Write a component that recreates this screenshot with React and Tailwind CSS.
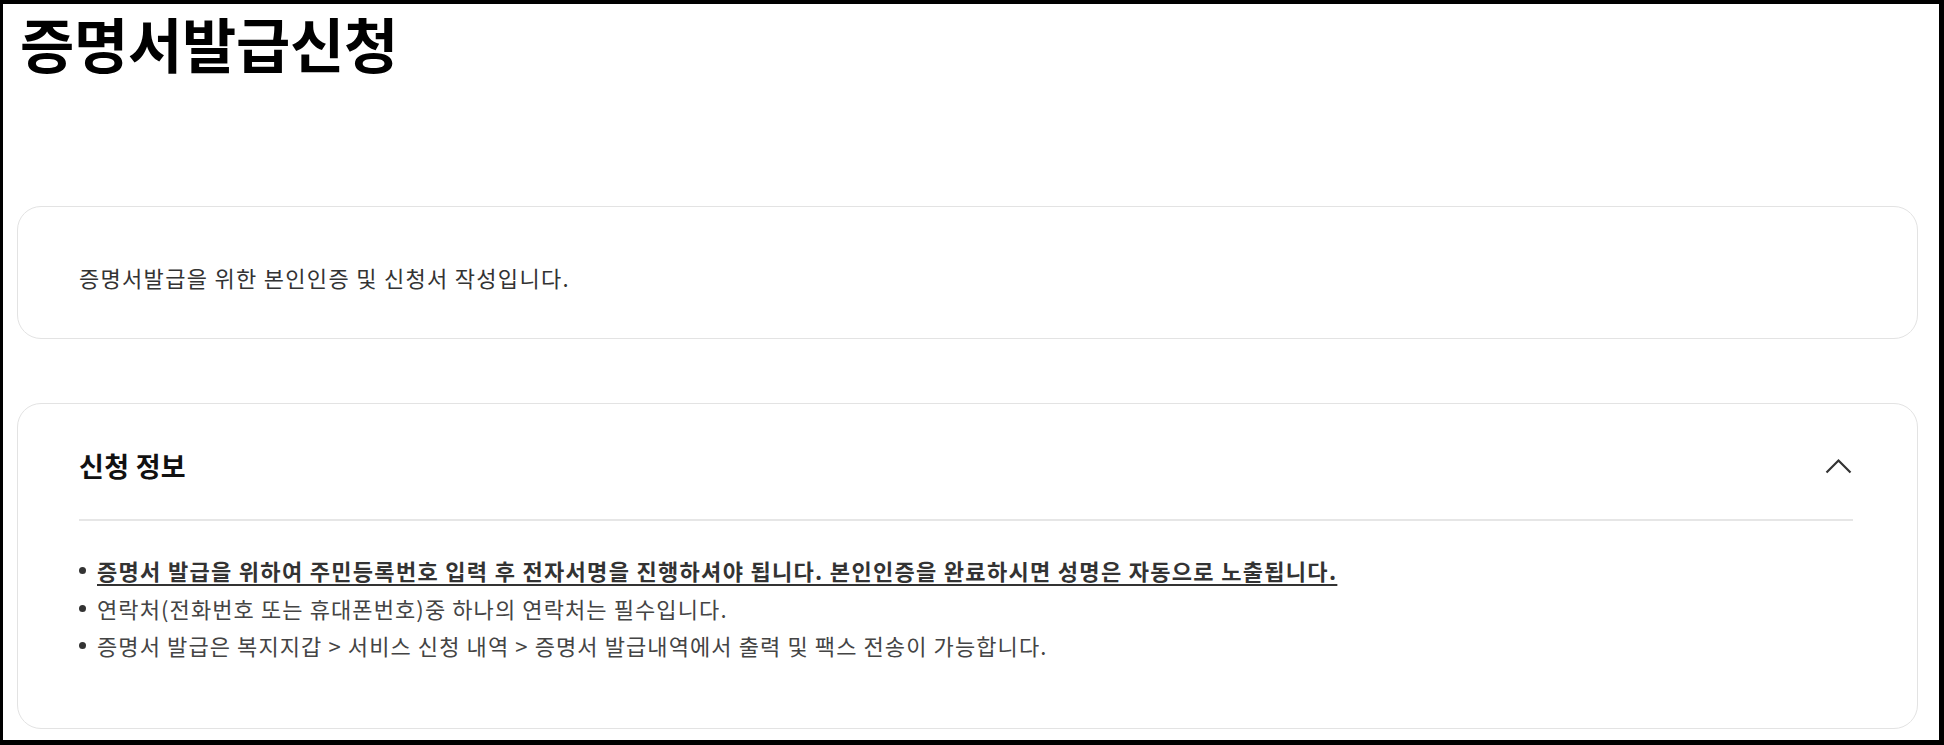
const notices = [
    { text: '증명서 발급을 위하여 주민등록번호 입력 후 전자서명을 진행하셔야 됩니다. 본인인증을 완료하시면 성명은 자동으로 노출됩니다.', strong: true },
    { text: '연락처(전화번호 또는 휴대폰번호)중 하나의 연락처는 필수입니다.' },
    { text: '증명서 발급은 복지지갑 > 서비스 신청 내역 > 증명서 발급내역에서 출력 및 팩스 전송이 가능합니다.' },
];

const App = () => {
    return (
        <div className="w-[1944px] h-[745px] bg-white border-black border-l-[3px] border-t-[4px] border-r-[5px] border-b-[5px] pl-[14px] pr-[21px] font-['Noto_Sans_CJK_KR','Noto_Sans',sans-serif] text-[#333]">
            {/* Page title */}
            <h1 className="mt-[6px] pl-[3px] text-[59px] leading-[66px] font-bold tracking-[-0.3px] text-black">증명서발급신청</h1>

            {/* Intro card */}
            <div className="mt-[130px] h-[133px] rounded-[24px] border border-[#e3e3e3] flex items-center pl-[61px] pt-[10px]">
                <p className="text-[22px] tracking-[1.3px] text-[#333]">증명서발급을 위한 본인인증 및 신청서 작성입니다.</p>
            </div>

            {/* Application info card */}
            <div className="mt-[64px] h-[326px] rounded-[24px] border border-[#e3e3e3] pl-[61px] pr-[64px] pt-[44px]">
                <div className="flex items-center justify-between h-[36px]">
                    <h2 className="text-[27px] font-bold tracking-[0.3px] text-[#111]">신청 정보</h2>
                    <svg width="27" height="16" viewBox="0 0 27 16" className="mr-[1px]">
                        <polyline points="1.5,14.5 13.5,2.5 25.5,14.5" fill="none" stroke="#333" strokeWidth="2.2" />
                    </svg>
                </div>
                <div className="mt-[35px] h-[2px] bg-[#e6e6e6]" />
                <ul className="mt-[31px] flex flex-col">
                    {notices.map((n, i) => (
                        <li key={i} className="flex items-center h-[37.5px]">
                            <span className="w-[7px] h-[7px] rounded-full bg-[#333] mr-[11px]" />
                            <span className={n.strong ? 'text-[22px] tracking-[1.3px] font-bold text-[#333] underline underline-offset-[4px]' : 'text-[22px] tracking-[1.1px] text-[#444]'}>
                                {n.text}
                            </span>
                        </li>
                    ))}
                </ul>
            </div>
        </div>
    );
};

export default App;
